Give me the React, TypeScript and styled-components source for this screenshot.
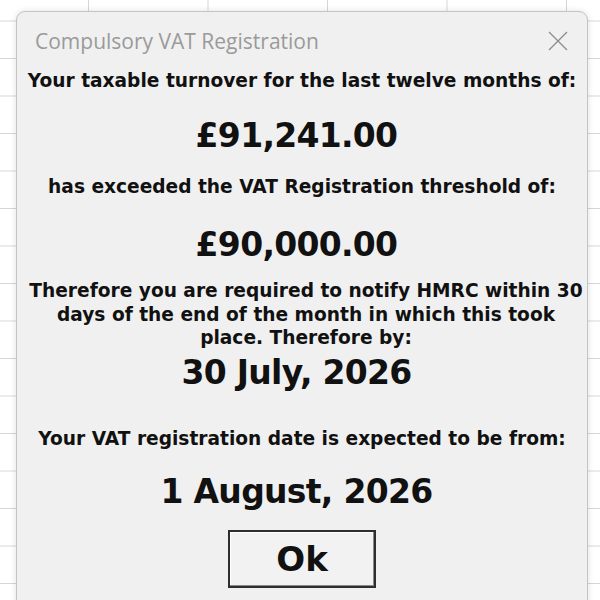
import React from 'react';
import styled, { createGlobalStyle } from 'styled-components';

// ---------------------------------------------------------------------------
// Global
// ---------------------------------------------------------------------------

const GlobalStyle = createGlobalStyle`
  html, body {
    margin: 0;
    padding: 0;
    background: #ffffff;
  }
`;

// ---------------------------------------------------------------------------
// Styled components
// ---------------------------------------------------------------------------

// spreadsheet cells peeking out behind the form
const Sheet = styled.div`
  width: 600px;
  height: 600px;
  box-sizing: border-box;
  padding: 11px 0 0 16px;
  overflow: hidden;
  background-color: #ffffff;
  background-image:
    linear-gradient(to right, #d6d6d6 1px, transparent 1px),
    linear-gradient(to bottom, #d6d6d6 1px, transparent 1px);
  background-size: 119.5px 100%, 100% 37.5px;
  background-position: 88px 0, 0 20.5px;
`;

const Dialog = styled.div`
  width: 572px;
  height: 600px;
  box-sizing: border-box;
  background: #f0f0f0;
  border: 1px solid #c4c4c4;
  border-radius: 9px;
  box-shadow: 0 0 6px rgba(0, 0, 0, 0.12);
  display: flex;
  flex-direction: column;
`;

const TitleBar = styled.div`
  height: 57px;
  display: flex;
  align-items: center;
  justify-content: space-between;
  padding: 0 19px 0 18px;
  flex-shrink: 0;
`;

const Title = styled.span`
  font-family: 'Open Sans', 'Noto Sans', sans-serif;
  font-size: 21px;
  color: #9a9a9a;
`;

const CloseButton = styled.button`
  width: 20px;
  height: 20px;
  padding: 0;
  border: 0;
  background: transparent;
  display: flex;
  align-items: center;
  justify-content: center;
  cursor: pointer;
`;

const Body = styled.div`
  display: flex;
  flex-direction: column;
  align-items: center;
  text-align: center;
  font-family: 'DejaVu Sans', Tahoma, sans-serif;
  color: #111111;
`;

const Prompt = styled.p<{ $top?: number; $shift?: number }>`
  margin: ${p => p.$top ?? 0}px 0 0;
  padding-left: ${p => Math.max(0, p.$shift ?? 0)}px;
  font-size: 18.6px;
  font-weight: 700;
  line-height: 23.5px;
  white-space: nowrap;
`;

const Amount = styled.p<{ $top?: number }>`
  margin: ${p => p.$top ?? 0}px 0 0;
  padding-right: 11px;
  font-size: 33px;
  font-weight: 700;
  line-height: 40px;
  letter-spacing: -0.7px;
`;

const OkButton = styled.button`
  margin-top: 18px;
  width: 148px;
  height: 58px;
  box-sizing: border-box;
  background: #f2f2f2;
  border: 2px solid #2e2e2e;
  box-shadow: inset -1px -1px 0 #8a8a8a, inset 1px 1px 0 #ffffff;
  font-family: 'DejaVu Sans', Tahoma, sans-serif;
  font-size: 34px;
  font-weight: 700;
  color: #111111;
  cursor: pointer;
  padding: 0;
`;

// ---------------------------------------------------------------------------
// Component
// ---------------------------------------------------------------------------

const App: React.FC = () => (
  <>
    <GlobalStyle />
    <Sheet>
      <Dialog>
        <TitleBar>
          <Title>Compulsory VAT Registration</Title>
          <CloseButton aria-label="Close">
            <svg width="20" height="20" viewBox="0 0 20 20">
              <path d="M1 1 L19 19 M19 1 L1 19" stroke="#8c8c8c" strokeWidth="1.3" fill="none" />
            </svg>
          </CloseButton>
        </TitleBar>
        <Body>
          <Prompt>Your taxable turnover for the last twelve months of:</Prompt>
          <Amount $top={23}>£91,241.00</Amount>
          <Prompt $top={19}>has exceeded the VAT Registration threshold of:</Prompt>
          <Amount $top={27}>£90,000.00</Amount>
          <Prompt $top={14} $shift={8}>
            Therefore you are required to notify HMRC within 30<br />
            days of the end of the month in which this took<br />
            place. Therefore by:
          </Prompt>
          <Amount $top={3}>30 July, 2026</Amount>
          <Prompt $top={34}>Your VAT registration date is expected to be from:</Prompt>
          <Amount $top={22}>1 August, 2026</Amount>
          <OkButton>Ok</OkButton>
        </Body>
      </Dialog>
    </Sheet>
  </>
);

export default App;
